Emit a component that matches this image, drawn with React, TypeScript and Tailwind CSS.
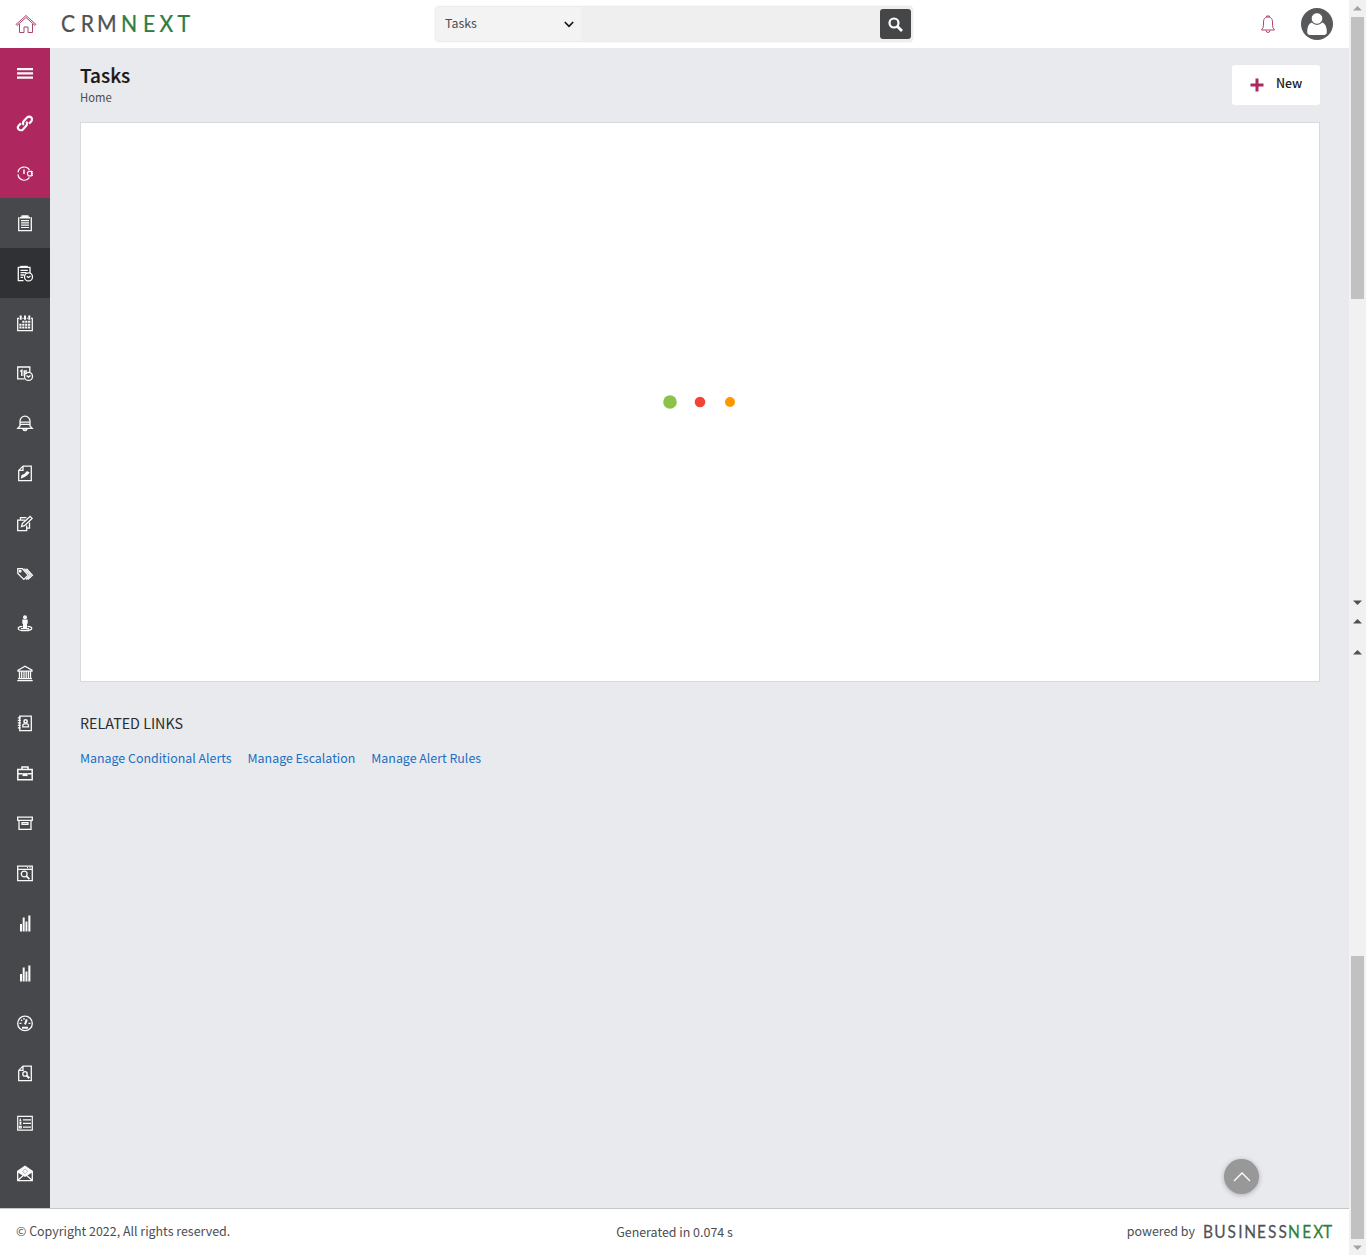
import React from "react";

type IconProps = { children: React.ReactNode; w?: number };

function Icon({ children, w = 1.3 }: IconProps) {
  return (
    <svg width="18" height="18" viewBox="-1 -1.4 18 18" fill="none" stroke="#fafafa" strokeWidth={w}>
      {children}
    </svg>
  );
}

const f = { fill: "#fafafa", stroke: "none" };

const bars = (
  <Icon>
    <path {...f} d="M3 8.600h2V16H3zM5.700 2h2v14h-2zM8.500 6h1.900v10H8.500zM11.300 0h2.100v16h-2.100z" />
  </Icon>
);

const menu: React.ReactNode[] = [
  <Icon><path {...f} d="M0 2.600h16v2.200H0zM0 6.900h16v2.200H0zM0 11.200h16v2.200H0z" /></Icon>,
  <Icon w={2.200}>
    <path d="M6.800 9.600a2.700 2.700 0 0 1 0-3.900l3.300-3.700a2.800 2.800 0 0 1 4.100 4l-2.200 2.200" />
    <path d="M9.200 6.400a2.700 2.700 0 0 1 0 3.900l-3.300 3.700a2.800 2.800 0 0 1-4.100-4l2.200-2.200" />
  </Icon>,
  <Icon w={1.200}>
    <path d="M1 7a6.300 6.300 0 0 1 11.500-2.500M1 9a6.300 6.300 0 0 0 11.500 3" />
    <path d="M7 4v4.500" strokeWidth="1.500" />
    <path d="M11.500 6h3v4.500h-3L10.500 9V7.400zM14.500 6.500H16M14.500 8.300H16M14.500 10H16" />
  </Icon>,
  <Icon>
    <path d="M2.500 2.500h-.8v12.800h12.600V2.500h-.8" />
    <path d="M3 2.200h10M4.500.700h7" strokeWidth="1.600" />
    <path d="M4 5.200h8M4 7.500h8M4 9.800h8M4 12.100h8" strokeWidth="1.200" />
  </Icon>,
  <Icon>
    <path d="M6.500 15.300H1.300V2H13v5.500" />
    <path d="M3.200 1.500h7.600" strokeWidth="2.200" />
    <path d="M3.500 5h7.300M3.500 7.300h6M3.500 9.600H7M3.500 12H6" strokeWidth="1.300" />
    <circle cx="11.500" cy="11.500" r="4" />
    <path d="m9.700 10.800 1.800 1.300 2-1.500" />
  </Icon>,
  <Icon>
    <path d="M2 3H.700v12.300h14.600V3H14M5.500 3h1M9.700 3h1" />
    <path d="M3.700 0v4.300M8 0v4.300M12.300 0v4.300" strokeWidth="2" />
    <path d="M2.300 9.300h11.400M2.300 12.100h11.400M5.300 6.400h8.400" strokeWidth="2.100" strokeDasharray="2.200 .700" />
  </Icon>,
  <Icon>
    <path d="M7.500 13.400H.700V1.600h12.100V6.500" />
    <path d="m3.200 6 1.600-1v5.500M10 5.500H7.300v5M7.500 7.800H10" strokeWidth="1.500" />
    <circle cx="11.500" cy="11" r="4" />
    <path d="m9.500 10 2 1.700 2-1.700" />
  </Icon>,
  <Icon w={1.300}>
    <path d="M3 10.500V5.800a5 5 0 0 1 10 0v4.700l2.200 2.400H.8zM3 6.800h10M3 9h10" />
    <path d="M6 13.500q2 3 4 0" strokeWidth="1.800" />
  </Icon>,
  <Icon>
    <path d="M6 .700h8.300v14.600H1.700V5zM6 .700V5H1.700" />
    <path {...f} d="m3.800 13 .7-3.500 2.700-1L10 5.500 12.700 7 10.500 9.500l-2 1.500-4 2z" />
  </Icon>,
  <Icon>
    <path d="M8 4.800H.700v10.500h9V10M3.500 4V2.300h6M12.500 7v5.700H10" />
    <path d="m4.500 11.200.8-3 7.800-7.200 2 2-7.600 7.300z" />
  </Icon>,
  <Icon w={1.300}>
    <path d="M.8 3.300V8l6 6 4.400-4.300-5.700-6.400z" />
    <path d="M7.300 3.300 13.300 9.700l-4.500 4.400M9.400 3.300l6 6.400-4.700 4.400" />
    <circle cx="3.200" cy="5.800" r=".8" />
  </Icon>,
  <Icon w={1.200}>
    <circle {...f} cx="8" cy="1.900" r="2" />
    <path {...f} d="M5.300 4h5.400v4.400H10V13H6V8.400h-.7z" />
    <path d="M5.500 11C2 11.300 1.200 12.200 1.200 13c0 1.100 2.800 2.200 6.800 2.200s6.800-1.100 6.800-2.200c0-.8-.8-1.700-4.300-2M4 13.200h8" />
  </Icon>,
  <Icon w={1.300}>
    <path d="M1 4.800 8 .800l7 4v1H1zM1 13.300h14M.300 15.200h15.400M2.500 6v7M4.700 6v7M7 6v7M9.200 6v7M11.400 6v7M13.500 6v7" />
  </Icon>,
  <Icon>
    <path d="M2.700.700h11.600v14.600H2.700z" />
    <path d="M.8 2.500h3M.8 5h3M.8 7.500h3M.8 10h3M.8 12.500h3" strokeWidth="1.400" />
    <circle cx="8.600" cy="6" r="1.600" strokeWidth="1.600" />
    <path d="M5.800 11.400V10q0-1.500 1.700-1.500h2.300q1.700 0 1.700 1.500v1.400z" />
  </Icon>,
  <Icon w={1.500}>
    <path d="M.8 4.200h14.400v10.100H.8zM.8 8.300h4.700M10.500 8.300h4.700M5 3.800V1.600h6v2.200" />
    <path {...f} d="M5.500 7.700h5v3h-5z" />
  </Icon>,
  <Icon w={1.300}>
    <path d="M.7 1.800h14.600V5H.700zM2 5v9h12V5M5 7.200h6v1.700H5z" />
  </Icon>,
  <Icon>
    <path d="M.700.800h14.600v14.500H.700zM.700 3.900h14.600" />
    <path d="M10 2.300h1M12.500 2.300h1" />
    <circle cx="7.200" cy="8.600" r="2.900" /><path d="m9.400 10.800 3 3" strokeWidth="1.700" />
  </Icon>,
  bars,
  bars,
  <Icon>
    <circle cx="8" cy="8" r="7.300" />
    <path d="M5 12.300h6M8 9l1.800-5" strokeWidth="2" />
    <path d="M2.500 8h2M11.500 8h2M4 4.300l1.200 1.200M7 2.600V4.300" />
  </Icon>,
  <Icon>
    <path d="M6 .700h8.300v14.600H1.700V5zM6 .700V5H1.700" />
    <circle cx="8" cy="8.500" r="2.200" /><path d="m9.500 10 2.800 2.800" strokeWidth="2" />
  </Icon>,
  <Icon w={1.200}>
    <path d="M.700 1h14.600v13.700H.700zM6 4.500h8M6 8h8M6 11.800h8" />
    <path d="M3.300 3v2.400M2.400 5.400h2M2.400 7.300h1.400v1.400H2.400M2.400 11h1.800v1.600H2.400z" />
  </Icon>,
  <Icon>
    <path d="M.7 6v9.300h14.600V6M.7 15l5.500-5M15.300 15l-5.500-5" />
    <path {...f} d="m8 0 8 5.500v1.200l-8 5-8-5V5.500z" />
    <path d="M9.700 7.100a2 2 0 1 1 .1-2q.3 1.800 1 .700" stroke="#a5a6a9" strokeWidth=".8" />
  </Icon>,
];

function Arrow({ up = false, light = false }: { up?: boolean; light?: boolean }) {
  return (
    <svg width="9" height="5" viewBox="0 0 9 5" className={light ? "fill-[#a3a3a3]" : "fill-[#505050]"}>
      <path d={up ? "M0 4.500 4.500 0 9 4.500z" : "M0 .500 4.500 5 9 .500z"} />
    </svg>
  );
}

type WordmarkProps = { first: string; second: string; firstX: number[]; secondX: number[]; width: number; size: number; squeeze: number; base: number };

function Wordmark({ first, second, firstX, secondX, width, size, squeeze, base }: WordmarkProps) {
  const place = (xs: number[]) => xs.map((x) => x / squeeze).join(" ");
  return (
    <svg width={width} height="24" className="overflow-visible font-[Lato]" fontSize={size} strokeWidth="0.25">
      <g transform={`scale(${squeeze} 1)`}>
        <text x={place(firstX)} y={base} fill="#505154" stroke="#505154">{first}</text>
        <text x={place(secondX)} y={base} fill="#2f7d3b" stroke="#2f7d3b">{second}</text>
      </g>
    </svg>
  );
}

export default function App() {
  return (
    <div className="flex h-[1255px] w-[1366px] overflow-hidden bg-[#e9eaee] font-['Noto_Sans_CJK_SC',sans-serif] text-[#4c4d50]">
      <div className="flex w-[1349px] flex-col">
        <header className="flex h-12 shrink-0 items-center bg-white">
          <svg width="22" height="20" viewBox="0 0 22 20" className="ml-[15px]" fill="none" stroke="#a9476f" strokeWidth="1">
            <path d="m1 10.500 10-9 10 9-1 1-9-8-9 8zM4.500 10v8.500H9V13h4v5.500h4.500V10" />
          </svg>
          <div className="ml-[25px] flex w-[127px]">
            <Wordmark first="CRM" second="NEXT" width={127} size={22.500} squeeze={0.94} base={20.300} firstX={[-1, 18.800, 35]} secondX={[59, 81, 97.500, 115.500]} />
          </div>
          <div className="ml-[246px] flex h-9 w-[478px] items-center rounded-sm border border-[#ececec] bg-[#efefef] shadow-[0_0_2px_#ececec]">
            <div className="flex h-full w-[145px] items-center justify-between bg-[#f3f3f3] pr-[7px] pl-[9px] text-[12.400px] leading-5">
              <span className="-mt-[3px]">Tasks</span>
              <svg width="10" height="7" viewBox="0 0 10 7" fill="none" stroke="#111" strokeWidth="1.600"><path d="m.8 1 4.200 4.300L9.200 1" /></svg>
            </div>
            <button className="ml-[299px] flex h-[30px] w-[31px] shrink-0 items-center justify-center rounded-[3px] bg-[#454648]">
              <svg width="15" height="15" viewBox="0 0 15 15" fill="none" stroke="white"><circle cx="6" cy="6" r="4.500" strokeWidth="2.200" /><path d="m9.200 9.200 4.800 4.800" strokeWidth="2.700" /></svg>
            </button>
          </div>
          <svg width="16" height="19" viewBox="0 0 16 19" className="mt-px ml-[347px]" fill="none" stroke="#ab4770" strokeWidth="1">
            <path d="M6.500 2V1h3v1M8 2C4.500 2 3.500 4.500 3.500 7v3.500q0 2-2 4.500h13q-2-2.500-2-4.500V7C12.500 4.500 11.500 2 8 2zM6 15.500q.3 2 2 2t2-2" />
          </svg>
          <svg width="32" height="32" viewBox="0 0 32 32" className="ml-[25px]">
            <circle cx="16" cy="16" r="16" fill="#58595b" />
            <path fill="white" d="M10.500 14.500q-4.300 2-4.300 9.500 0 3 3 3h13.600q3 0 3-3 0-7.500-4.300-9.500-5.500 4-11 0z" />
            <circle cx="16" cy="10.500" r="5.800" fill="white" stroke="#58595b" strokeWidth="1" />
          </svg>
        </header>
        <div className="flex h-[1160px]">
          <nav className="flex w-[50px] shrink-0 flex-col bg-[#47484b]">
            {menu.map((icon, i) => (
              <div key={i} className={`flex h-[50px] shrink-0 items-center justify-center ${i < 3 ? "bg-[#ae275f]" : i === 4 ? "bg-[#303134]" : ""}`}>{icon}</div>
            ))}
          </nav>
          <main className="flex flex-1 flex-col pr-[29px] pl-[30px]">
            <div className="flex h-[74px] shrink-0 justify-between pt-4">
              <div>
                <h1 className="text-[19px] leading-[22px] font-medium text-[#18191b] [-webkit-text-stroke:0.2px_#18191b]">Tasks</h1>
                <p className="mt-px text-[11.300px] leading-[21px]">Home</p>
              </div>
              <button className="mt-px flex h-10 w-[88px] items-center rounded-[3px] bg-white pl-[18px] text-[12.400px] font-medium text-[#222]">
                <svg width="14" height="14" className="mr-3"><path d="M5.500.500h3v13h-3zM.500 5.500h13v3H.5z" fill="#ae275f" /></svg>
                <span className="-mt-[3px]">New</span>
              </button>
            </div>
            <section className="flex h-[560px] shrink-0 items-center justify-center border border-[#d8d9dc] bg-white">
              <svg width="74" height="14"><circle cx="7" cy="7" r="6.800" fill="#8bc34a" /><circle cx="37" cy="7" r="5.300" fill="#f44336" /><circle cx="67" cy="7" r="5" fill="#ff9800" /></svg>
            </section>
            <h2 className="mt-[30px] text-[14.300px] leading-[22px] text-[#2b2c2e]">RELATED LINKS</h2>
            <div className="mt-3 flex gap-4 text-[12.400px] leading-6 text-[#1b6ec2]">
              <a>Manage Conditional Alerts</a><a>Manage Escalation</a><a>Manage Alert Rules</a>
            </div>
            <button className="mt-auto mr-[61px] mb-[14px] flex size-[35px] items-center justify-center self-end rounded-full bg-[#989898] shadow-[0_1px_5px_#0004]">
              <svg width="18" height="10" fill="none" stroke="white" strokeWidth="1.300"><path d="m1 9 8-8 8 8" /></svg>
            </button>
          </main>
        </div>
        <footer className="grid h-[47px] grid-cols-3 items-center border-t border-[#c5c6c8] bg-white pr-4 pl-4 text-[12.450px] leading-5">
          <span className="-mt-0.5">© Copyright 2022, All rights reserved.</span>
          <span className="text-center">Generated in 0.074 s</span>
          <div className="-mt-0.5 flex items-center justify-end gap-[9px]">
            <span>powered by</span>
            <Wordmark
              first="BUSINESS" second="NEXT" width={129} size={18} squeeze={0.86} base={19}
              firstX={[-1, 10.300, 23.500, 34.300, 40.300, 53, 64, 74.500]} secondX={[84, 98.200, 109.300, 119]}
            />
          </div>
        </footer>
      </div>
      <aside className="flex w-[17px] shrink-0 flex-col items-center bg-[#f1f1f1]">
        <div className="flex h-[17px] items-center"><Arrow up light /></div>
        <div className="h-[282px] w-[13px] bg-[#c1c1c1]" />
        <div className="mt-[301px]"><Arrow /></div>
        <div className="mt-[14px]"><Arrow up /></div>
        <div className="mt-[26px]"><Arrow up /></div>
        <div className="mt-auto h-[283px] w-[13px] bg-[#c1c1c1]" />
        <div className="flex h-4 items-center"><Arrow light /></div>
      </aside>
    </div>
  );
}
